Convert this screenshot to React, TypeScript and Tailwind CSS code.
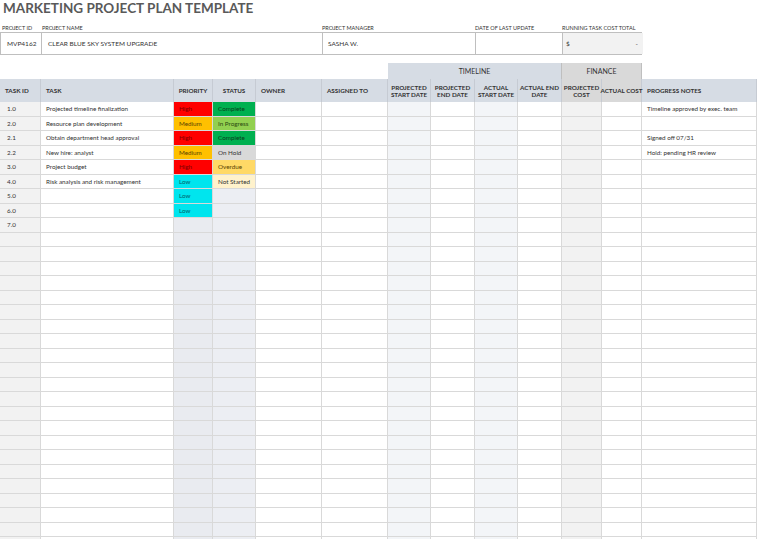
import React from "react";

const cols = [41, 133, 39, 43, 66, 66, 43, 44, 43, 44, 40, 40, 115];
const colBg = ["bg-[#f2f2f2]", "", "bg-[#e9ebf0]", "bg-[#eceef3]", "", "", "bg-[#f3f5f8]", "", "bg-[#f3f5f8]", "", "bg-[#f2f2f2]", "", ""];
const heads = ["TASK ID", "TASK", "PRIORITY", "STATUS", "OWNER", "ASSIGNED TO", "PROJECTED START DATE", "PROJECTED END DATE", "ACTUAL START DATE", "ACTUAL END DATE", "PROJECTED COST", "ACTUAL COST", "PROGRESS NOTES"];
const pr: Record<string, string> = { High: "bg-[#ff0000] text-[#7a0000]", Medium: "bg-[#ffc000] text-[#5a4300]", Low: "bg-[#00e5ee] text-[#00606a]" };
const st: Record<string, string> = { Complete: "bg-[#00b050] text-[#0a3d1d]", "In Progress": "bg-[#92d050] text-[#2d4a10]", "On Hold": "bg-[#d9d9d9] text-[#333]", Overdue: "bg-[#ffd966] text-[#5a4300]", "Not Started": "bg-[#fff2cc] text-[#333]" };
const data: [string, string, string, string, string][] = [
  ["1.0", "Projected timeline finalization", "High", "Complete", "Timeline approved by exec. team"],
  ["2.0", "Resource plan development", "Medium", "In Progress", ""],
  ["2.1", "Obtain department head approval", "High", "Complete", "Signed off 07/31"],
  ["2.2", "New hire: analyst", "Medium", "On Hold", "Hold: pending HR review"],
  ["3.0", "Project budget", "High", "Overdue", ""],
  ["4.0", "Risk analysis and risk management", "Low", "Not Started", ""],
  ["5.0", "", "Low", "", ""],
  ["6.0", "", "Low", "", ""],
  ["7.0", "", "", "", ""],
];
const grid = { gridTemplateColumns: cols.map((c) => c + "px").join(" ") };

export default function App() {
  const rows = Array.from({ length: 31 }, (_, i) => data[i] || ["", "", "", "", ""]);
  return (
    <div className="w-[757px] h-[539px] overflow-hidden bg-white text-[#333] font-[Lato,sans-serif]">
      <div className="h-[17px] pl-[3px] text-[13.5px] leading-[17px] font-bold text-[#595959]">MARKETING PROJECT PLAN TEMPLATE</div>
      <div className="mt-[7px] grid text-[5.5px] h-[8px] leading-[8px] text-[#333]" style={{ gridTemplateColumns: "41px 281px 153px 87px 80px" }}>
        <div className="pl-[2px]">PROJECT ID</div><div className="pl-[1px]">PROJECT NAME</div><div>PROJECT MANAGER</div><div>DATE OF LAST UPDATE</div><div>RUNNING TASK COST TOTAL</div>
      </div>
      <div className="grid h-[23px] text-[6.5px] w-[642px] border border-[#bfbfbf]" style={{ gridTemplateColumns: "41px 281px 153px 87px 80px" }}>
        <div className="pl-[6px] flex items-center border-r border-[#bfbfbf]">MVP4162</div>
        <div className="pl-[6px] flex items-center border-r border-[#bfbfbf]">CLEAR BLUE SKY SYSTEM UPGRADE</div>
        <div className="pl-[5px] flex items-center border-r border-[#bfbfbf]">SASHA W.</div>
        <div className="border-r border-[#bfbfbf]"></div>
        <div className="bg-[#f2f2f2] flex items-center justify-between px-[3px]"><span>$</span><span className="pr-[2px]">-</span></div>
      </div>
      <div className="mt-[8px] grid h-[16px] text-[7px]" style={grid}>
        <div className="col-span-6"></div>
        <div className="col-span-4 bg-[#d6dce4] flex items-center justify-center border-r border-[#bfbfbf]">TIMELINE</div>
        <div className="col-span-2 bg-[#d9d9d9] flex items-center justify-center border-r border-[#bfbfbf]">FINANCE</div>
      </div>
      <div className="grid h-[23px] bg-[#d6dce4] text-[6.3px] font-bold leading-[7px]" style={grid}>
        {heads.map((h, i) => (
          <div key={i} className={`flex items-center border-r border-[#c6cbd3] ${i >= 6 && i <= 11 ? "justify-center text-center" : i === 2 || i === 3 ? "justify-center" : "pl-[5px]"} ${i === 11 ? "whitespace-nowrap" : ""} ${i >= 10 && i <= 11 ? "bg-[#d9d9d9]" : ""}`}>{h}</div>
        ))}
      </div>
      {rows.map((r, ri) => (
        <div key={ri} className="grid h-[14.5px] text-[6.3px] border-b border-[#d9d9d9]" style={grid}>
          {cols.map((_, ci) => {
            let content = "";
            let cls = colBg[ci];
            if (ci === 0) content = r[0];
            if (ci === 1) content = r[1];
            if (ci === 2 && r[2]) { content = r[2]; cls = pr[r[2]]; }
            if (ci === 3 && r[3]) { content = r[3]; cls = st[r[3]]; }
            if (ci === 12) content = r[4];
            return (
              <div key={ci} className={`flex items-center border-r border-[#d9d9d9] whitespace-nowrap overflow-hidden ${ci === 0 ? "pl-[7px]" : "pl-[5px]"} ${cls}`}>{content}</div>
            );
          })}
        </div>
      ))}
    </div>
  );
}
